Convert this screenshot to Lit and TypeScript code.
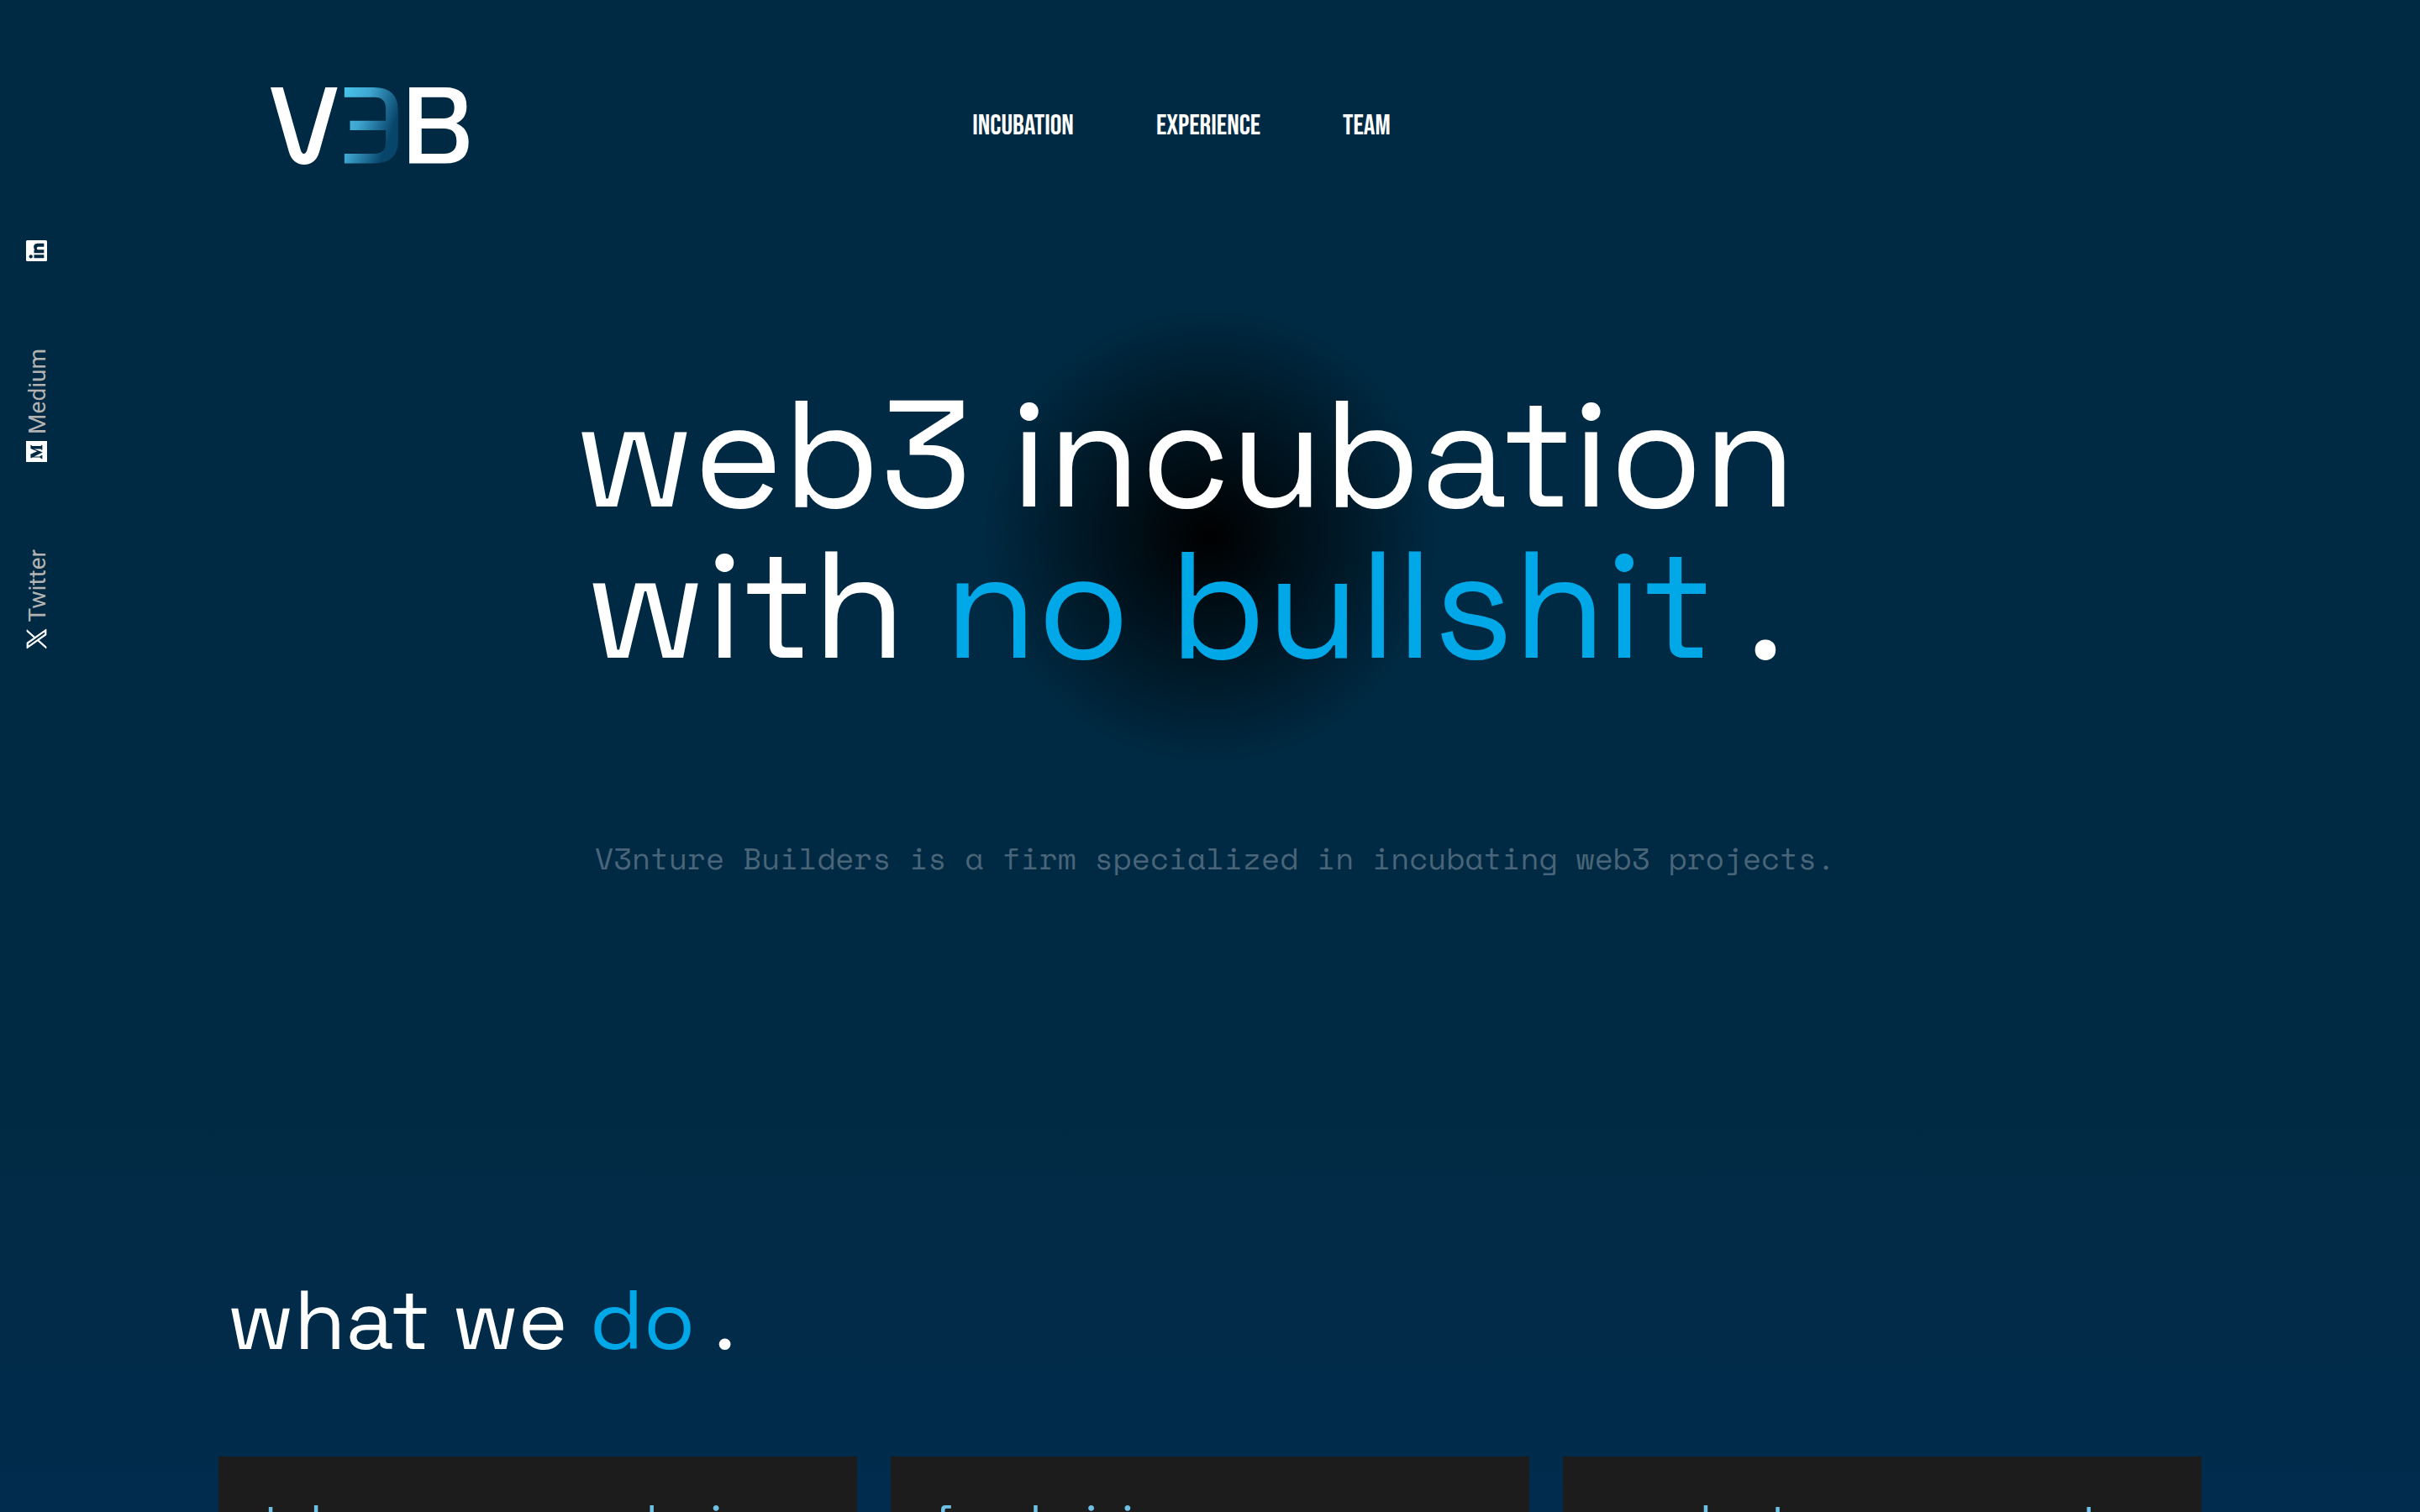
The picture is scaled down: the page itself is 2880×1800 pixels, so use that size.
import { LitElement, html, css, svg } from "lit";
import { customElement } from "lit/decorators.js";

const logo = svg`
  <svg class="logo-mark" viewBox="66 72 709 276" aria-hidden="true">
    <defs>
      <linearGradient id="three" gradientUnits="userSpaceOnUse" x1="335" y1="90" x2="525" y2="160">
        <stop offset="0" stop-color="#48c0e8" />
        <stop offset="0.4" stop-color="#3ea6d0" />
        <stop offset="1" stop-color="#08456b" />
      </linearGradient>
    </defs>
    <path fill="#fff" d="M66 72H110L174 298Q178 309 185 309Q192 309 196 298L262 72H305L240 304Q226 348 186 348Q146 348 132 304Z" />
    <path fill="url(#three)" d="M330 72H435Q522 72 522 155V262Q522 344 435 344H330V309H438Q478 309 478 268V225H350V191H478V148Q478 107 438 107H330Z" />
    <path fill="#fff" fill-rule="evenodd" d="M562 72H690Q767 72 767 140Q767 184 730 200Q774 218 774 268Q774 344 690 344H562ZM606 107V183H685Q723 183 723 145Q723 107 685 107ZM606 219V309H685Q731 309 731 264Q731 219 685 219Z" />
  </svg>`;

const linkedinIcon = svg`
  <svg class="icon" viewBox="0 0 24 24" aria-hidden="true">
    <path fill="#fff" fill-rule="evenodd" d="M1.500 0H22.500Q24 0 24 1.500V22.500Q24 24 22.500 24H1.500Q0 24 0 22.500V1.500Q0 0 1.500 0ZM3.500 9.100V20.500H7.400V9.100ZM5.450 3.400A2.100 2.100 0 1 0 5.460 7.600A2.100 2.100 0 1 0 5.450 3.400ZM9.300 9.100V20.500H13.100V14.900C13.100 13.300 13.400 12.300 14.900 12.300C16.500 12.300 16.600 13.600 16.600 15V20.500H20.500V14.200C20.500 11.100 19.800 8.800 16.200 8.800C14.500 8.800 13.300 9.700 12.900 10.500V9.100Z" />
  </svg>`;

const mediumIcon = svg`
  <svg class="icon" viewBox="0 0 24 24" aria-hidden="true">
    <path fill="#fff" d="M0 0H24V24H0Z" />
    <path fill="#002a43" d="M4.600 5.200H9L12.300 12.600L15.300 5.200H19.500V5.900L18.300 7V16.800L19.500 18V18.600H13.700V18L14.900 16.800V9L11.200 18.600H10.700L6.300 9V15.600L8 17.900V18.600H3.600V17.900L5.300 15.600V7.400L4.600 5.900Z" />
  </svg>`;

const xIcon = svg`
  <svg class="icon" viewBox="0 0 24 24" aria-hidden="true">
    <path fill="#fff" stroke="#fff" stroke-width="0.8" d="M14.100 10.300L22.300 1H20.300L13.200 9.100L7.600 1H1L9.600 13.300L1 23H3L10.500 14.500L16.400 23H23L14.100 10.300ZM11.400 13.300L10.500 12.100L3.700 2.500H6.700L12.300 10.300L13.200 11.500L20.400 21.600H17.400Z" />
  </svg>`;

@customElement("app-root")
export class AppRoot extends LitElement {
  static styles = css`
    :host {
      display: block;
      height: 100vh;
      overflow-y: auto;
      scrollbar-width: none;
      background: linear-gradient(#002a43 0%, #002a43 72%, #022c4d 100%);
      color: #fff;
      font-family: "Space Grotesk", Inter, "Liberation Sans", sans-serif;
    }
    a {
      color: inherit;
      text-decoration: none;
    }
    h1,
    h2,
    h3,
    p {
      margin: 0;
      font-weight: 400;
    }
    .wrap {
      width: 82%;
      max-width: 2360px;
      margin: 0 auto;
    }
    .header {
      display: grid;
      grid-template-columns: 1fr auto 1fr;
      align-items: center;
      box-sizing: border-box;
      padding: 104px 68px 0 62px;
    }
    .logo {
      justify-self: start;
      display: block;
    }
    .logo-mark {
      display: block;
      width: 236px;
      height: 92px;
    }
    .nav {
      display: flex;
      gap: 98px;
      margin-right: 62px;
      font-family: "Bebas Neue", "Liberation Sans", sans-serif;
      font-size: 34px;
      line-height: 34px;
    }
    .social {
      position: absolute;
      top: 286px;
      left: 31px;
      display: flex;
      flex-direction: column;
      gap: 104px;
      font-family: Roboto, sans-serif;
      font-size: 28px;
      line-height: 28px;
      color: #b3b3b3;
    }
    .social-link {
      display: flex;
      flex-direction: column;
      align-items: flex-start;
      gap: 8px;
    }
    .social-text {
      writing-mode: vertical-rl;
      transform: rotate(180deg);
    }
    .icon {
      display: block;
      width: 25px;
      height: 25px;
      transform: rotate(-90deg);
    }
    .hero {
      position: relative;
      padding-top: 255px;
      text-align: center;
    }
    .glow {
      position: absolute;
      top: 168px;
      left: 50%;
      width: 548px;
      height: 548px;
      margin-left: -274px;
      background: radial-gradient(circle closest-side, #000, transparent);
    }
    .title {
      position: relative;
      padding-right: 60px;
      font-size: 180px;
      line-height: 180px;
    }
    .line {
      display: block;
    }
    .accent {
      color: #00a8e8;
    }
    .lead {
      position: relative;
      padding: 187px 0 0 12px;
      font-family: "Space Mono", "Liberation Mono", monospace;
      font-size: 36px;
      line-height: 48px;
      color: #4a6579;
    }
    .section-title {
      padding: 470px 0 0 10px;
      font-size: 100px;
      line-height: 112px;
    }
    .cards {
      display: grid;
      grid-template-columns: repeat(3, minmax(0, 1fr));
      gap: 40px;
      padding-top: 106px;
    }
    .card {
      box-sizing: border-box;
      min-height: 400px;
      padding: 44px 50px;
      background: #1c1c1c;
      color: #6ec1e4;
    }
    .card-title {
      font-size: 56px;
      line-height: 68px;
      white-space: nowrap;
    }
  `;

  render() {
    return html`
      <header class="wrap header">
        <a class="logo" href="#" aria-label="V3B">${logo}</a>
        <nav class="nav">
          <a href="#incubation">INCUBATION</a>
          <a href="#experience">EXPERIENCE</a>
          <a href="#team">TEAM</a>
        </nav>
      </header>
      <aside class="social">
        <a class="social-link" href="#linkedin" aria-label="LinkedIn">${linkedinIcon}</a>
        <a class="social-link" href="#medium"><span class="social-text">Medium</span>${mediumIcon}</a>
        <a class="social-link" href="#twitter"><span class="social-text">Twitter</span>${xIcon}</a>
      </aside>
      <main>
        <section class="hero">
          <div class="glow"></div>
          <h1 class="title">
            <span class="line">web3 incubation</span>
            <span class="line">with <span class="accent">no bullshit</span> .</span>
          </h1>
          <p class="lead">V3nture Builders is a firm specialized in incubating web3 projects.</p>
        </section>
        <section class="wrap" id="incubation">
          <h2 class="section-title">what we <span class="accent">do</span> .</h2>
          <div class="cards">
            <article class="card"><h3 class="card-title">token economy design</h3></article>
            <article class="card"><h3 class="card-title">fundraising</h3></article>
            <article class="card"><h3 class="card-title">product management</h3></article>
          </div>
        </section>
      </main>
    `;
  }
}
